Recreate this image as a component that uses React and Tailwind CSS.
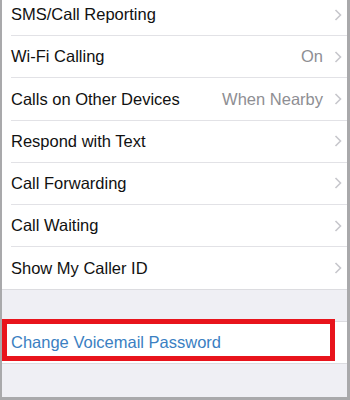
import React from "react";

const rows = [
  { label: "SMS/Call Reporting" },
  { label: "Wi-Fi Calling", value: "On" },
  { label: "Calls on Other Devices", value: "When Nearby" },
  { label: "Respond with Text" },
  { label: "Call Forwarding" },
  { label: "Call Waiting" },
  { label: "Show My Caller ID" },
];

function Chevron() {
  return (
    <svg width="8" height="12" viewBox="0 0 8 12" className="shrink-0">
      <polyline points="1.5,1 6.5,6 1.5,11" fill="none" stroke="#c7c7cc" strokeWidth="1.6" />
    </svg>
  );
}

export default function App() {
  return (
    <div
      className="relative w-[350px] h-[400px] overflow-hidden bg-[#efeff4] border-l-2 border-r-[3px] border-b-[3px] border-[#a9a9ab]"
      style={{ fontFamily: '"Liberation Sans", Arial, sans-serif' }}
    >
      <div className="-mt-[6px] bg-white">
        {rows.map((r, i) => (
          <div key={r.label} className="flex h-[42.2px] items-center pl-[9px]">
            <div
              className={
                "flex h-full flex-1 items-center pr-[5px] " +
                (i < rows.length - 1 ? "border-b border-[#e2e2e6]" : "")
              }
            >
              <span className="flex-1 text-[16.5px] text-[#111]">{r.label}</span>
              {r.value && <span className="mr-[11px] text-[16.5px] text-[#8e8e93]">{r.value}</span>}
              <Chevron />
            </div>
          </div>
        ))}
      </div>
      <div className="h-[32px] border-t border-[#dcdce0]" />
      <div className="flex h-[43px] items-center border-y border-[#dcdce0] bg-white pl-[9px]">
        <span className="text-[16.5px] text-[#3a80c2]">Change Voicemail Password</span>
      </div>
      <div className="absolute left-0 top-[319px] h-[42px] w-[333px] border-[5px] border-[#e8141c]" />
    </div>
  );
}
